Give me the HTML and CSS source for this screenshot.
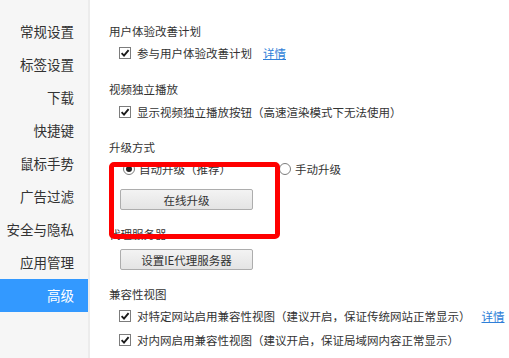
FILE: index.html
```html
<!DOCTYPE html>
<html lang="zh-CN">
<head>
<meta charset="utf-8">
<title>高级设置</title>
<link rel="stylesheet" href="styles.css">
</head>
<body>
<div class="app">
  <nav class="sidebar">
    <div class="nav-item">常规设置</div>
    <div class="nav-item">标签设置</div>
    <div class="nav-item">下载</div>
    <div class="nav-item">快捷键</div>
    <div class="nav-item">鼠标手势</div>
    <div class="nav-item">广告过滤</div>
    <div class="nav-item">安全与隐私</div>
    <div class="nav-item">应用管理</div>
    <div class="nav-item active">高级</div>
  </nav>
  <main class="content">
    <section class="section">
      <div class="title">用户体验改善计划</div>
      <div class="row">
        <svg class="check" viewBox="0 0 12 12"><rect x="0.5" y="0.5" width="11" height="11" fill="#fff" stroke="#7c7c7c"/><path d="M2.6 6.2 L5 8.6 L9.6 3.2" fill="none" stroke="#1a1a1a" stroke-width="1.9"/></svg>
        <span>参与用户体验改善计划</span>
        <a class="link">详情</a>
      </div>
    </section>
    <section class="section">
      <div class="title">视频独立播放</div>
      <div class="row row-low">
        <svg class="check" viewBox="0 0 12 12"><rect x="0.5" y="0.5" width="11" height="11" fill="#fff" stroke="#7c7c7c"/><path d="M2.6 6.2 L5 8.6 L9.6 3.2" fill="none" stroke="#1a1a1a" stroke-width="1.9"/></svg>
        <span>显示视频独立播放按钮（高速渲染模式下无法使用）</span>
      </div>
    </section>
    <section class="section">
      <div class="title">升级方式</div>
      <div class="row">
        <svg class="radio" viewBox="0 0 12 12"><circle cx="6" cy="6" r="5.5" fill="#fff" stroke="#7c7c7c"/><circle cx="6" cy="6" r="3" fill="#222"/></svg>
        <span class="radio-label">自动升级（推荐）</span>
        <svg class="radio" viewBox="0 0 12 12"><circle cx="6" cy="6" r="5.5" fill="#fff" stroke="#7c7c7c"/></svg>
        <span>手动升级</span>
      </div>
      <button class="btn btn-upgrade">在线升级</button>
    </section>
    <section class="section">
      <div class="title">代理服务器</div>
      <button class="btn btn-proxy">设置IE代理服务器</button>
    </section>
    <section class="section">
      <div class="title">兼容性视图</div>
      <div class="row">
        <svg class="check" viewBox="0 0 12 12"><rect x="0.5" y="0.5" width="11" height="11" fill="#fff" stroke="#7c7c7c"/><path d="M2.6 6.2 L5 8.6 L9.6 3.2" fill="none" stroke="#1a1a1a" stroke-width="1.9"/></svg>
        <span>对特定网站启用兼容性视图（建议开启，保证传统网站正常显示）</span>
        <a class="link">详情</a>
      </div>
      <div class="row">
        <svg class="check" viewBox="0 0 12 12"><rect x="0.5" y="0.5" width="11" height="11" fill="#fff" stroke="#7c7c7c"/><path d="M2.6 6.2 L5 8.6 L9.6 3.2" fill="none" stroke="#1a1a1a" stroke-width="1.9"/></svg>
        <span>对内网启用兼容性视图（建议开启，保证局域网内容正常显示）</span>
      </div>
    </section>
    <div class="highlight-box"></div>
  </main>
</div>
</body>
</html>
```

FILE: styles.css
```css
html, body {
  margin: 0;
  padding: 0;
  background: #fff;
}

body {
  font-family: "Noto Sans CJK SC", "Microsoft YaHei", sans-serif;
  color: #333;
  width: 509px;
  height: 358px;
  overflow: hidden;
}

.app {
  display: flex;
  height: 358px;
}

.sidebar {
  width: 88px;
  flex: none;
  background: #f6f6f6;
  border-right: 2px solid #ececec;
  padding-top: 15px;
  box-sizing: content-box;
}

.nav-item {
  height: 33px;
  line-height: 33px;
  text-align: right;
  padding-right: 14px;
  font-size: 13.5px;
  color: #333;
}

.nav-item.active {
  background: #3399ff;
  color: #fff;
}

.content {
  position: relative;
  flex: 1;
  padding: 21px 0 0 19px;
  font-size: 11.5px;
}

.section {
  margin-bottom: 14px;
}

.title {
  line-height: 20px;
  height: 20px;
}

.row {
  display: flex;
  align-items: center;
  height: 24px;
  padding-left: 10px;
  white-space: nowrap;
}

.row-low {
  padding-top: 2px;
  height: 22px;
}

.check {
  width: 12px;
  height: 12px;
  margin-right: 6px;
  flex: none;
}

.radio {
  width: 12px;
  height: 12px;
  margin: 0 4px 0 4px;
  flex: none;
}

.radio-label {
  width: 126px;
  margin-right: 10px;
}

.link {
  color: #2f7fd8;
  text-decoration: underline;
  margin-left: 11px;
}

.btn {
  display: block;
  width: 133px;
  height: 21px;
  padding: 0;
  margin-left: 11px;
  font-family: inherit;
  font-size: 11.5px;
  color: #333;
  background: linear-gradient(#f3f3f3, #e4e4e4);
  border: 1px solid #adadad;
  border-radius: 2px;
}

.btn-upgrade {
  margin-top: 8px;
  margin-bottom: 4px;
}

.btn-proxy {
  margin-top: 5px;
  margin-bottom: 5px;
}

.highlight-box {
  position: absolute;
  left: 19px;
  top: 162px;
  width: 161px;
  height: 67px;
  border: 5px solid #ff0000;
  border-radius: 5px;
}
```
